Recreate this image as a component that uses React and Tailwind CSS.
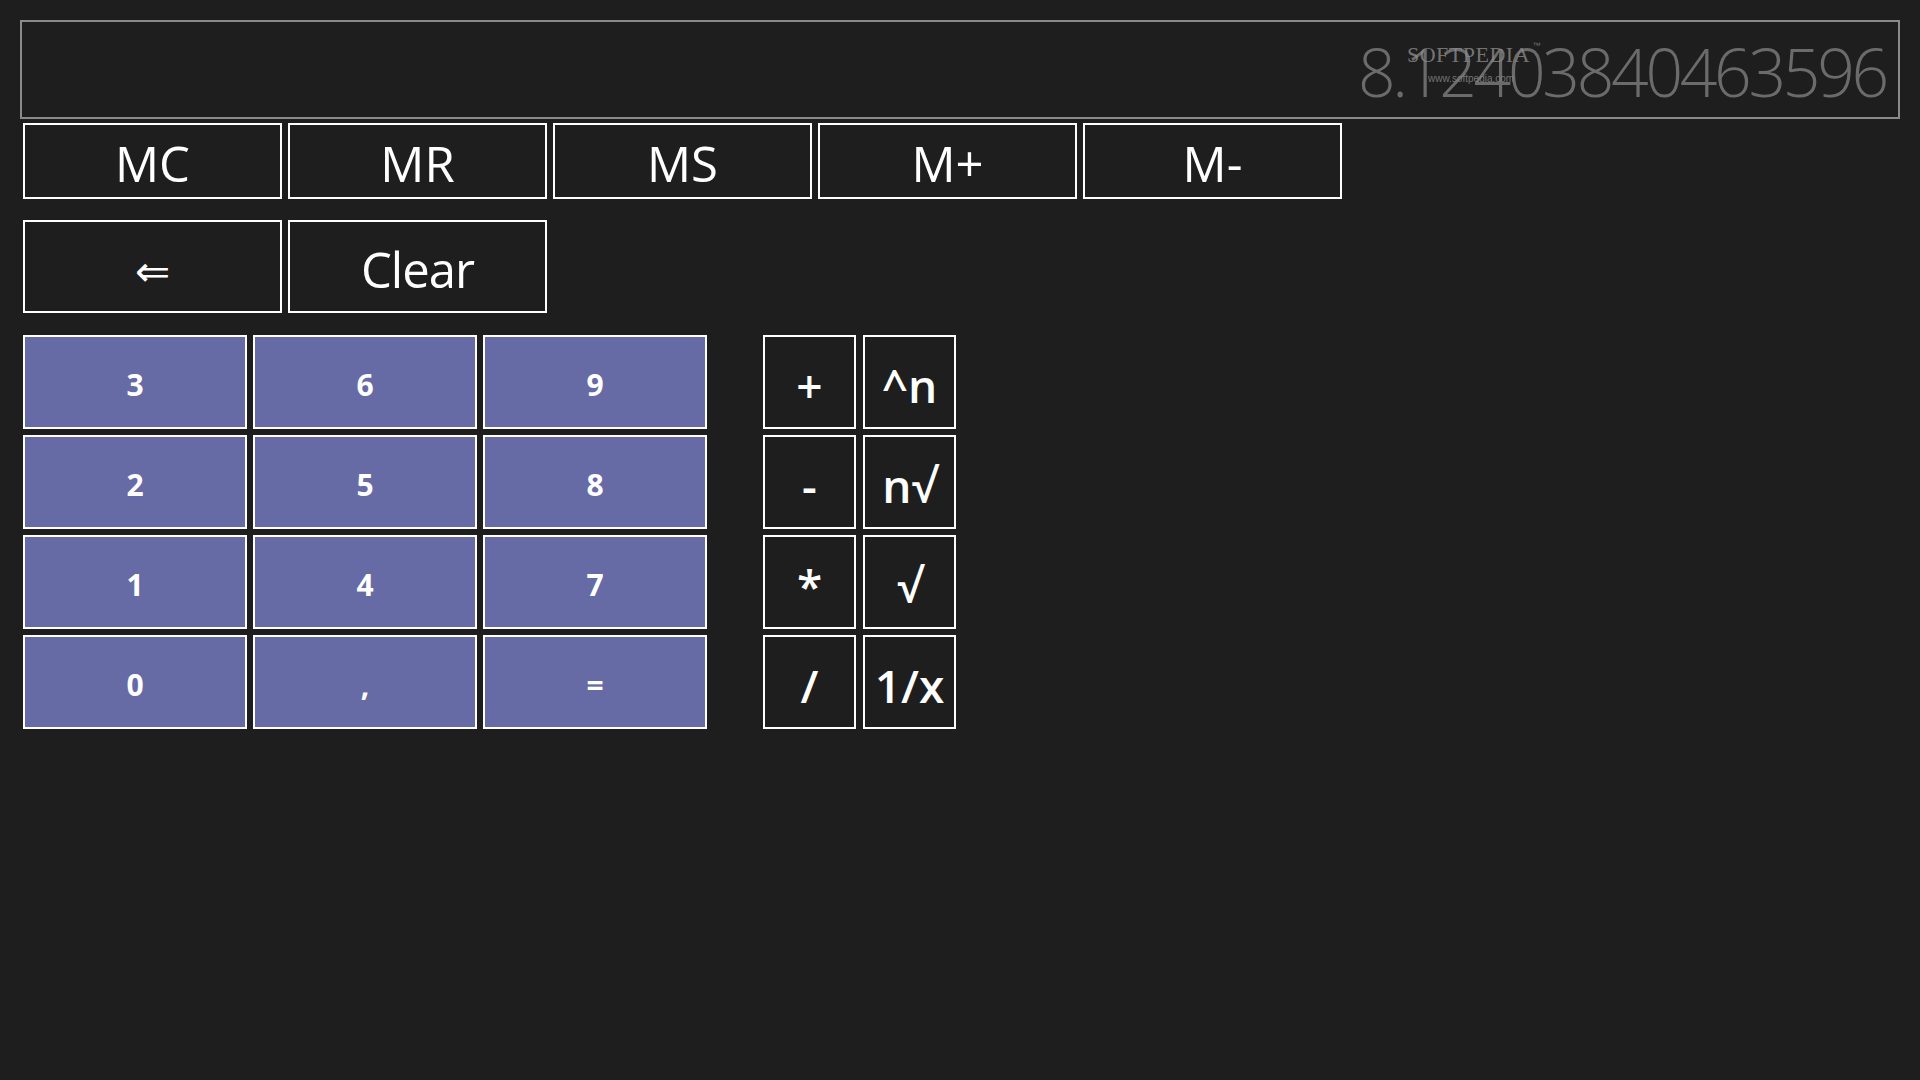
import React from "react";

const font = { fontFamily: '"Open Sans", "Noto Sans", "DejaVu Sans", sans-serif' };

function MemBtn({ label, tall }) {
  return (
    <div
      className={`flex items-center justify-center w-[259px] border-2 border-white text-white text-[49px] leading-none ${tall ? "h-[93px] pt-[6px]" : "h-[76px] pt-[5px]"}`}
    >
      {label}
    </div>
  );
}

function NumBtn({ label }) {
  return (
    <div className="flex items-center justify-center w-[224px] h-[94px] border-2 border-white bg-[#666ba6] text-white text-[30px] font-bold leading-none pt-[6px]">
      {label}
    </div>
  );
}

function OpBtn({ label }) {
  return (
    <div className="flex items-center justify-center w-[93px] h-[94px] border-2 border-white text-white text-[46px] font-semibold leading-none pt-[6px]">
      {label}
    </div>
  );
}

export default function App() {
  const nums = ["3", "6", "9", "2", "5", "8", "1", "4", "7", "0", ",", "="];
  const ops = ["+", "^n", "-", "n√", "*", "√", "/", "1/x"];
  return (
    <div className="w-[1920px] h-[1080px] bg-[#1e1e1e] px-[20px] pt-[20px]" style={font}>
      <div className="relative h-[99px] border-2 border-[#8a8a8a] flex items-center justify-end pr-[12px]">
        <span className="text-[#6b6b6b] text-[66px] font-light leading-none tracking-[-3.3px] pt-[2px]">
          8.12403840463596
        </span>
        <div className="absolute left-[1385px] top-[22px] flex flex-col items-start pointer-events-none">
          <div
            className="relative text-[22px] leading-none text-[#8c8c8c]/80 tracking-[0.5px]"
            style={{ fontFamily: '"Liberation Serif", serif' }}
          >
            SOFTPEDIA
            <span className="absolute -right-[11px] -top-[2px] text-[8px]" style={{ fontFamily: '"Liberation Sans", sans-serif' }}>™</span>
          </div>
          <div
            className="ml-[21px] mt-[8px] text-[10px] leading-none text-[#8c8c8c]/80"
            style={{ fontFamily: '"Liberation Sans", sans-serif' }}
          >
            www.softpedia.com
          </div>
        </div>
      </div>

      <div className="flex gap-[6px] mt-[4px] ml-[3px]">
        {["MC", "MR", "MS", "M+", "M-"].map((l) => (
          <MemBtn key={l} label={l} />
        ))}
      </div>

      <div className="flex gap-[6px] mt-[21px] ml-[3px]">
        <MemBtn label={<span style={{ fontFamily: '"DejaVu Sans", sans-serif' }} className="text-[42px] pt-[4px]">⇐</span>} tall />
        <MemBtn label={<span className="tracking-[-1px]">Clear</span>} tall />
      </div>

      <div className="flex mt-[22px] ml-[3px] gap-[56px]">
        <div className="grid grid-cols-[224px_224px_224px] gap-x-[6px] gap-y-[6px]">
          {nums.map((n, i) => (
            <NumBtn key={i} label={n} />
          ))}
        </div>
        <div className="grid grid-cols-[93px_93px] gap-x-[7px] gap-y-[6px]">
          {ops.map((o, i) => (
            <OpBtn key={i} label={o} />
          ))}
        </div>
      </div>
    </div>
  );
}
